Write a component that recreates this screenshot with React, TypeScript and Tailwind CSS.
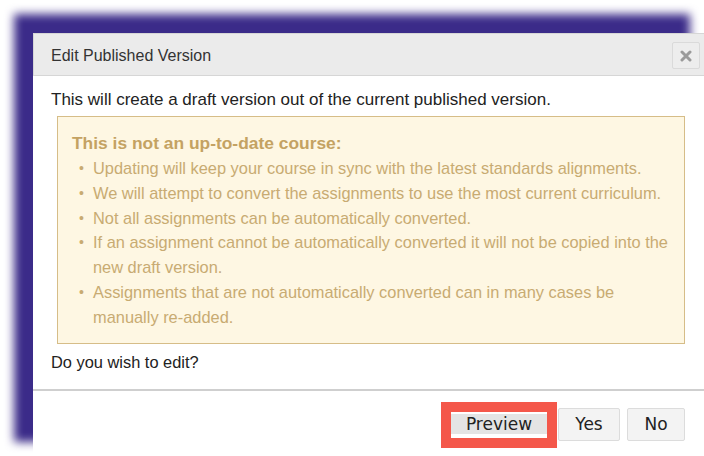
const bullets: string[][] = [
  ['Updating will keep your course in sync with the latest standards alignments.'],
  ['We will attempt to convert the assignments to use the most current curriculum.'],
  ['Not all assignments can be automatically converted.'],
  ['If an assignment cannot be automatically converted it will not be copied into the', 'new draft version.'],
  ['Assignments that are not automatically converted can in many cases be', 'manually re-added.'],
]

export default function App() {
  return (
    <div className="relative w-[704px] h-[456px] overflow-hidden bg-white font-['Liberation_Sans',Arial,sans-serif]">
      {/* purple backdrop behind the dialog */}
      <div className="absolute left-[14px] top-[14px] w-[676px] h-[428px] bg-[#3b2b89] blur-[5px]" />

      <div className="absolute left-[33px] top-[33px] w-[676px] h-[440px] bg-white flex flex-col">
        {/* Header */}
        <div className="h-[43px] shrink-0 bg-[#ebebeb] border border-[#d6d6d6] flex items-center justify-between pl-[17px] pr-[8px]">
          <span className="text-[16px] leading-[20px] pt-[3px] text-[#333]">Edit Published Version</span>
          <button className="mt-[2px] w-[28px] h-[27px] bg-[#ededed] border border-[#dadada] rounded-[2px] flex items-center justify-center">
            <svg width="12" height="12" viewBox="0 0 12 12">
              <path d="M2 2 L10 10 M10 2 L2 10" stroke="#9a9a9a" strokeWidth="3" strokeLinecap="round" />
            </svg>
          </button>
        </div>

        {/* Body */}
        <div className="px-[18px] pt-[14px]">
          <p className="text-[17px] leading-[20px] text-[#222]">
            This will create a draft version out of the current published version.
          </p>
          <div className="mt-[6px] mx-[6px] h-[228px] bg-[#fef7e3] border border-[#d6bd88] pl-[14px] pt-[14px] text-[#c8ab72]">
            <div className="text-[17.4px] leading-[24px] font-bold text-[#c4a262]">This is not an up-to-date course:</div>
            <ul className="mt-[1px] pl-[7px]">
              {bullets.map((lines, i) =>
                lines.map((line, j) => (
                  <li key={`${i}-${j}`} className="flex text-[16.4px] leading-[24.8px] whitespace-nowrap">
                    <span className="w-[14px] shrink-0 text-[14px]">{j === 0 ? '•' : ''}</span>
                    <span>{line}</span>
                  </li>
                ))
              )}
            </ul>
          </div>
          <p className="mt-[8px] text-[16.4px] leading-[20px] text-[#222]">Do you wish to edit?</p>
        </div>

        <div className="mt-[17px] h-[2px] bg-[#cfcfcf]" />

        {/* Footer buttons */}
        <div className="mt-[11px] flex items-center justify-end pr-[24px] font-['DejaVu_Sans',Verdana,sans-serif] text-[17px] text-[#222]">
          <div className="border-[10px] border-[#f4574a]">
            <button className="w-[96px] h-[20px] bg-[#e4e4e4] leading-[20px]">Preview</button>
          </div>
          <button className="ml-[1px] w-[62px] h-[33px] bg-[#f3f3f3] border border-[#dcdcdc] rounded-[2px]">Yes</button>
          <button className="ml-[7px] w-[58px] h-[33px] bg-[#f3f3f3] border border-[#dcdcdc] rounded-[2px]">No</button>
        </div>
      </div>
    </div>
  )
}
